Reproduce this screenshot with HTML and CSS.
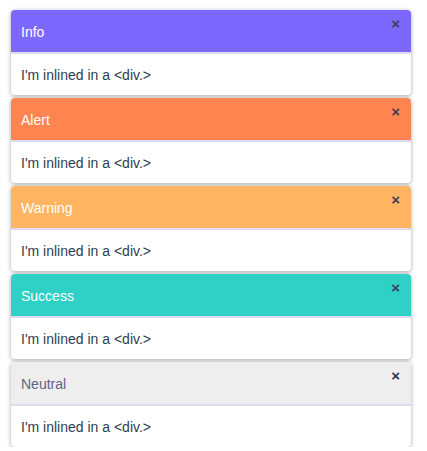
FILE: index.html
```html
<!DOCTYPE html>
<html>
<head>
<meta charset="utf-8">
<link rel="stylesheet" href="styles.css">
</head>
<body>
<div class="stack">
  <div class="card info">
    <div class="head"><span class="title">Info</span><span class="close">×</span></div>
    <div class="body">I'm inlined in a &lt;div.&gt;</div>
  </div>
  <div class="card alert">
    <div class="head"><span class="title">Alert</span><span class="close">×</span></div>
    <div class="body">I'm inlined in a &lt;div.&gt;</div>
  </div>
  <div class="card warning">
    <div class="head"><span class="title">Warning</span><span class="close">×</span></div>
    <div class="body">I'm inlined in a &lt;div.&gt;</div>
  </div>
  <div class="card success">
    <div class="head"><span class="title">Success</span><span class="close">×</span></div>
    <div class="body">I'm inlined in a &lt;div.&gt;</div>
  </div>
  <div class="card neutral">
    <div class="head"><span class="title">Neutral</span><span class="close">×</span></div>
    <div class="body">I'm inlined in a &lt;div.&gt;</div>
  </div>
</div>
</body>
</html>
```
FILE: styles.css
```css
html, body {
  margin: 0;
  padding: 0;
  background: #ffffff;
}
body {
  font-family: "Liberation Sans", Arial, sans-serif;
  font-size: 14px;
  color: #2c3e50;
}
.stack {
  display: flex;
  flex-direction: column;
  gap: 3px;
  padding: 10px 0 0 11px;
  width: 400px;
}
.card {
  width: 400px;
  height: 85px;
  border-radius: 4px;
  overflow: hidden;
  background: #ffffff;
  box-shadow: 0 1px 4px rgba(0, 0, 0, 0.35);
  display: flex;
  flex-direction: column;
}
.head {
  height: 42px;
  flex: none;
  display: flex;
  align-items: center;
  justify-content: space-between;
  padding: 0 10px;
  border-bottom: 2px solid #dcdcee;
  color: #ffffff;
  position: relative;
}
.title {
  font-size: 14px;
  padding-top: 1px;
}
.close {
  position: absolute;
  right: 11px;
  top: 6px;
  font-size: 15px;
  font-weight: bold;
  color: #3b3f5c;
  line-height: 15px;
}
.body {
  flex: 1;
  display: flex;
  align-items: center;
  padding: 0 10px;
  color: #2c3e50;
}
.info .head { background: #7d68fe; }
.alert .head { background: #ff8550; }
.warning .head { background: #ffb562; }
.success .head { background: #2fd0c5; }
.neutral .head { background: #eeeeee; color: #5e6484; }
.neutral .close { color: #2c3350; }
```
